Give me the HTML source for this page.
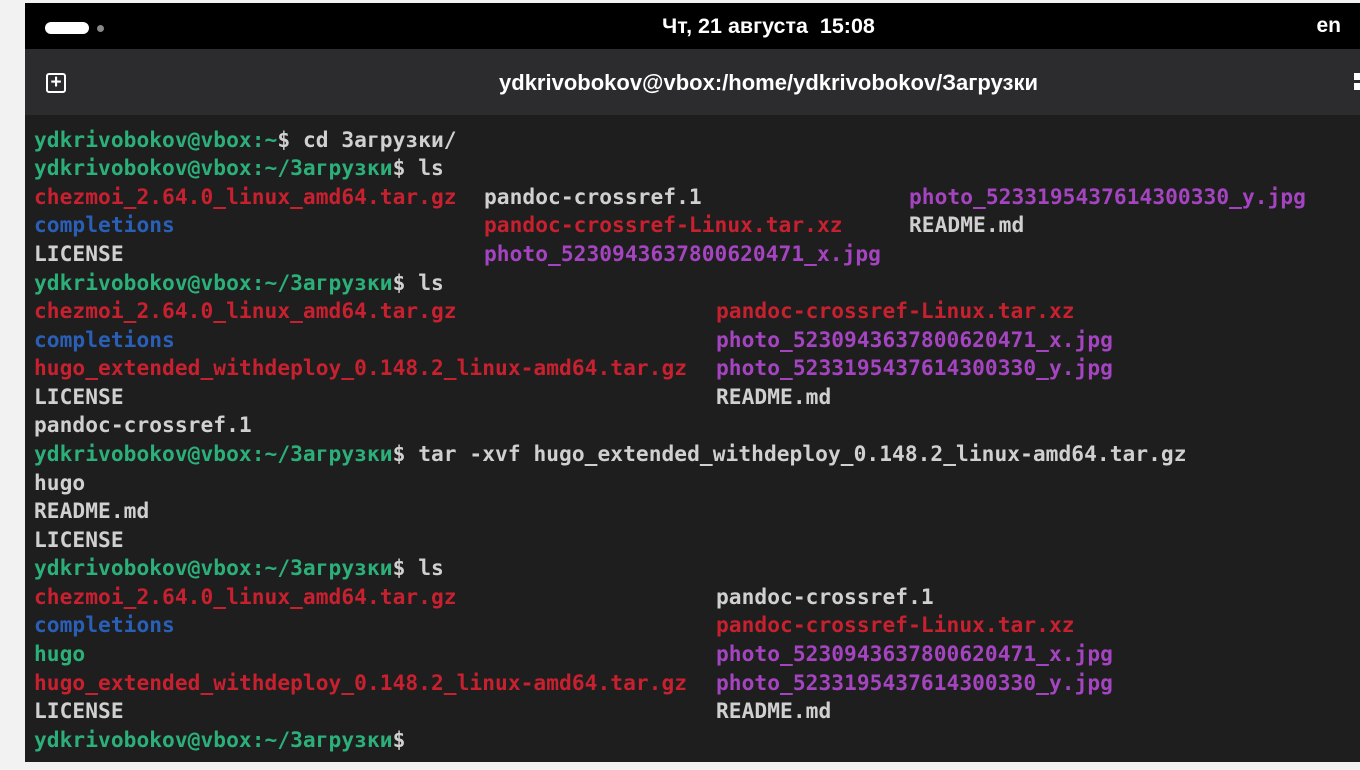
<!DOCTYPE html>
<html><head><meta charset="utf-8"><style>
body{margin:0;width:1360px;height:770px;background:#f2f2f2;position:relative;overflow:hidden;font-family:"Liberation Sans",sans-serif}
#top{position:absolute;left:25px;top:3px;width:1335px;height:46px;background:#000}
#hdr{position:absolute;left:25px;top:49px;width:1335px;height:66px;background:#2c2c2e}
#term{position:absolute;left:25px;top:115px;width:1335px;height:647px;background:#1e1e1e}
.l{position:absolute;font-family:"DejaVu Sans Mono","Liberation Mono",monospace;font-size:21.2px;font-weight:bold;white-space:pre;line-height:28px;color:#d0d0d0;letter-spacing:0.05px}
.g{color:#2bb07a}.r{color:#c7202f}.b{color:#2a5fb8}.p{color:#a544c0}.w{color:#d0d0d0}
</style></head><body>
<div id="top">
<div style="position:absolute;left:20px;top:19px;width:44px;height:12px;border-radius:6px;background:#fff"></div>
<div style="position:absolute;left:72px;top:22px;width:7px;height:7px;border-radius:50%;background:#888"></div>
<div style="position:absolute;left:0;width:1487px;top:11px;text-align:center;color:#fff;font-weight:bold;font-size:21.5px">Чт, 21 августа&nbsp; 15:08</div>
<div style="position:absolute;right:19px;top:11px;color:#fff;font-weight:bold;font-size:21px">en</div>
</div>
<div id="hdr">
<div style="position:absolute;left:21px;top:24px;width:16px;height:16px;border:2.5px solid #fff;border-radius:3px;color:#fff;font-weight:bold;font-size:19px;line-height:16px;text-align:center">+</div>
<div style="position:absolute;left:0;width:1487px;top:21px;text-align:center;color:#fff;font-weight:bold;font-size:22px">ydkrivobokov@vbox:/home/ydkrivobokov/Загрузки</div>
<div style="position:absolute;right:0;top:24px;width:6px;height:7px;background:#fff"></div>
<div style="position:absolute;right:0;top:34px;width:6px;height:7px;background:#fff"></div>
</div>
<div id="term"></div>
<div class="l" style="left:34px;top:126px"><span class="g">ydkrivobokov@vbox:~</span>$ cd Загрузки/</div>
<div class="l" style="left:34px;top:154px"><span class="g">ydkrivobokov@vbox:~/Загрузки</span>$ ls</div>
<div class="l r" style="left:34px;top:183px">chezmoi_2.64.0_linux_amd64.tar.gz</div>
<div class="l" style="left:484px;top:183px">pandoc-crossref.1</div>
<div class="l p" style="left:909px;top:183px">photo_5233195437614300330_y.jpg</div>
<div class="l b" style="left:34px;top:211px">completions</div>
<div class="l r" style="left:484px;top:211px">pandoc-crossref-Linux.tar.xz</div>
<div class="l" style="left:909px;top:211px">README.md</div>
<div class="l" style="left:34px;top:240px">LICENSE</div>
<div class="l p" style="left:484px;top:240px">photo_5230943637800620471_x.jpg</div>
<div class="l" style="left:34px;top:269px"><span class="g">ydkrivobokov@vbox:~/Загрузки</span>$ ls</div>
<div class="l r" style="left:34px;top:297px">chezmoi_2.64.0_linux_amd64.tar.gz</div>
<div class="l r" style="left:716px;top:297px">pandoc-crossref-Linux.tar.xz</div>
<div class="l b" style="left:34px;top:326px">completions</div>
<div class="l p" style="left:716px;top:326px">photo_5230943637800620471_x.jpg</div>
<div class="l r" style="left:34px;top:354px">hugo_extended_withdeploy_0.148.2_linux-amd64.tar.gz</div>
<div class="l p" style="left:716px;top:354px">photo_5233195437614300330_y.jpg</div>
<div class="l" style="left:34px;top:383px">LICENSE</div>
<div class="l" style="left:716px;top:383px">README.md</div>
<div class="l" style="left:34px;top:411px">pandoc-crossref.1</div>
<div class="l" style="left:34px;top:440px"><span class="g">ydkrivobokov@vbox:~/Загрузки</span>$ tar -xvf hugo_extended_withdeploy_0.148.2_linux-amd64.tar.gz</div>
<div class="l" style="left:34px;top:469px">hugo</div>
<div class="l" style="left:34px;top:497px">README.md</div>
<div class="l" style="left:34px;top:526px">LICENSE</div>
<div class="l" style="left:34px;top:554px"><span class="g">ydkrivobokov@vbox:~/Загрузки</span>$ ls</div>
<div class="l r" style="left:34px;top:583px">chezmoi_2.64.0_linux_amd64.tar.gz</div>
<div class="l" style="left:716px;top:583px">pandoc-crossref.1</div>
<div class="l b" style="left:34px;top:611px">completions</div>
<div class="l r" style="left:716px;top:611px">pandoc-crossref-Linux.tar.xz</div>
<div class="l g" style="left:34px;top:640px">hugo</div>
<div class="l p" style="left:716px;top:640px">photo_5230943637800620471_x.jpg</div>
<div class="l r" style="left:34px;top:669px">hugo_extended_withdeploy_0.148.2_linux-amd64.tar.gz</div>
<div class="l p" style="left:716px;top:669px">photo_5233195437614300330_y.jpg</div>
<div class="l" style="left:34px;top:697px">LICENSE</div>
<div class="l" style="left:716px;top:697px">README.md</div>
<div class="l" style="left:34px;top:726px"><span class="g">ydkrivobokov@vbox:~/Загрузки</span>$</div>
</body></html>
